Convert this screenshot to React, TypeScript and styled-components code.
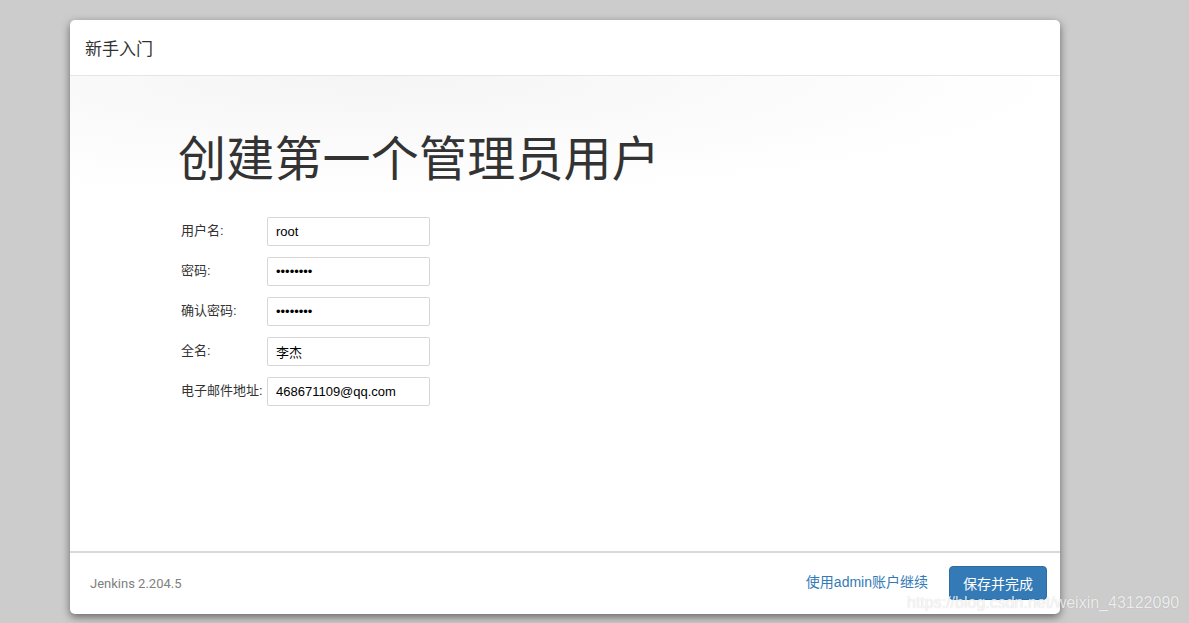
import styled, { createGlobalStyle } from 'styled-components';

const GlobalStyle = createGlobalStyle`
  html, body {
    margin: 0;
    padding: 0;
    background: #cccccc;
    font-family: "Liberation Sans", Arial, "Noto Sans CJK SC", sans-serif;
  }
`;

const Page = styled.div`
  position: relative;
  width: 1189px;
  height: 623px;
  padding: 20px 0 0 70px;
  box-sizing: border-box;
`;

const Dialog = styled.div`
  width: 990px;
  height: 594px;
  background: #fff;
  border-radius: 5px;
  box-shadow: 0 3px 9px rgba(0, 0, 0, 0.5);
  display: flex;
  flex-direction: column;
  overflow: hidden;
`;

const Header = styled.div`
  height: 56px;
  flex: 0 0 auto;
  border-bottom: 1px solid #e5e5e5;
  display: flex;
  align-items: center;
  padding: 0 15px;
  box-sizing: border-box;
  font-family: "Noto Sans CJK SC", sans-serif;
  font-size: 17px;
  color: #333;
`;

const Body = styled.div`
  flex: 1 1 auto;
  padding: 43px 0 0 108px;
  background: radial-gradient(ellipse 700px 120px at 30% 0%, #f5f5f5 0%, #ffffff 100%);
`;

const Title = styled.h1`
  margin: 0 0 26px;
  font-family: "Noto Sans CJK SC", sans-serif;
  font-weight: 400;
  font-size: 48px;
  line-height: 72px;
  color: #333;
  letter-spacing: 0.2px;
`;

const Form = styled.div`
  display: grid;
  grid-template-columns: 86px 163px;
  row-gap: 11px;
  padding-left: 3px;
`;

const Label = styled.label`
  font-family: "Liberation Sans", "Noto Sans CJK SC", sans-serif;
  font-size: 13px;
  color: #333;
  padding-top: 3px;
  white-space: nowrap;
`;

const Input = styled.input`
  width: 163px;
  height: 29px;
  box-sizing: border-box;
  border: 1px solid #d6d6d6;
  border-radius: 2px;
  padding: 0 8px;
  font-family: "Liberation Sans", "Noto Sans CJK SC", sans-serif;
  font-size: 13px;
  color: #000;
  outline: none;
`;

const Footer = styled.div`
  height: 63px;
  flex: 0 0 auto;
  border-top: 2px solid #d9d9d9;
  display: flex;
  align-items: center;
  padding: 0 13px 0 20px;
  box-sizing: border-box;
`;

const Version = styled.span`
  font-family: Roboto, "Liberation Sans", sans-serif;
  font-size: 13px;
  color: #808080;
  flex: 1 1 auto;
`;

const LinkButton = styled.a`
  font-family: "Liberation Sans", "Noto Sans CJK SC", sans-serif;
  font-size: 14px;
  color: #337ab7;
  text-decoration: none;
  margin-right: 21px;
  padding-bottom: 6px;
`;

const PrimaryButton = styled.button`
  height: 34px;
  padding: 0 13px;
  margin-bottom: 2px;
  background: #337ab7;
  border: 1px solid #2e6da4;
  border-radius: 4px;
  color: #fff;
  font-family: "Noto Sans CJK SC", sans-serif;
  font-size: 14px;
`;

const Watermark = styled.div`
  position: absolute;
  left: 907px;
  top: 594px;
  font-family: "Liberation Sans", sans-serif;
  font-size: 16px;
  color: rgba(255, 255, 255, 0.8);
  text-shadow: 0 0 1px rgba(0, 0, 0, 0.2);
  pointer-events: none;
`;

const fields = [
  { label: '用户名:', type: 'text', value: 'root' },
  { label: '密码:', type: 'password', value: 'password' },
  { label: '确认密码:', type: 'password', value: 'password' },
  { label: '全名:', type: 'text', value: '李杰' },
  { label: '电子邮件地址:', type: 'text', value: '468671109@qq.com' },
];

export default function App() {
  return (
    <>
      <GlobalStyle />
      <Page>
        <Dialog>
          <Header>新手入门</Header>
          <Body>
            <Title>创建第一个管理员用户</Title>
            <Form>
              {fields.map((f) => [
                <Label key={f.label + 'l'}>{f.label}</Label>,
                <Input key={f.label + 'i'} type={f.type} defaultValue={f.value} />,
              ])}
            </Form>
          </Body>
          <Footer>
            <Version>Jenkins 2.204.5</Version>
            <LinkButton href="#">使用admin账户继续</LinkButton>
            <PrimaryButton>保存并完成</PrimaryButton>
          </Footer>
        </Dialog>
        <Watermark>https://blog.csdn.net/weixin_43122090</Watermark>
      </Page>
    </>
  );
}
